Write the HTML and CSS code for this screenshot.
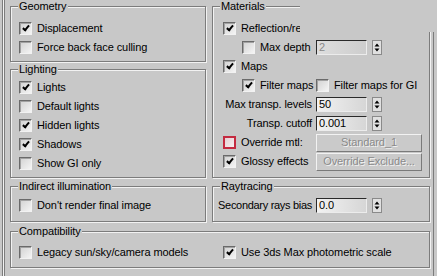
FILE: index.html
```html
<!DOCTYPE html>
<html lang="en">
<head>
  <meta charset="UTF-8">
  <meta name="viewport" content="width=device-width, initial-scale=1.0">
  <title>Global switches</title>
  <link rel="stylesheet" href="styles.css">
</head>
<body>
  <div class="rollout">
    <div class="panel">
      <div class="col">
        <div class="group geometry">
          <div class="title">Geometry</div>
          <div class="row"><span class="cb on"></span>Displacement</div>
          <div class="row"><span class="cb"></span>Force back face culling</div>
        </div>
        <div class="group lighting">
          <div class="title">Lighting</div>
          <div class="row"><span class="cb on"></span>Lights</div>
          <div class="row"><span class="cb"></span>Default lights</div>
          <div class="row"><span class="cb on"></span>Hidden lights</div>
          <div class="row"><span class="cb on"></span>Shadows</div>
          <div class="row"><span class="cb"></span>Show GI only</div>
        </div>
      </div>

      <div class="group materials">
        <div class="title">Materials</div>
        <div class="row"><span class="cb on"></span>Reflection/refraction</div>
        <div class="row">
          <div class="lead indent"><span class="cb"></span>Max depth</div>
          <span class="field off">2</span>
          <svg class="arrows" width="10" height="15" viewBox="0 0 10 15"><rect x="0.5" y="0.5" width="9" height="14" fill="#e0e0e0" stroke="#8a8a8a"/><path d="M2.5 6.5h5L5 3.5z M2.5 8.5h5L5 11.5z" fill="#000"/></svg>
        </div>
        <div class="row"><span class="cb on"></span>Maps</div>
        <div class="row">
          <div class="lead indent"><span class="cb on"></span>Filter maps</div>
          <span class="cb"></span>Filter maps for GI
        </div>
        <div class="row">
          <div class="lead right">Max transp. levels</div>
          <span class="field">50</span>
          <svg class="arrows" width="10" height="15" viewBox="0 0 10 15"><rect x="0.5" y="0.5" width="9" height="14" fill="#e0e0e0" stroke="#8a8a8a"/><path d="M2.5 6.5h5L5 3.5z M2.5 8.5h5L5 11.5z" fill="#000"/></svg>
        </div>
        <div class="row">
          <div class="lead right">Transp. cutoff</div>
          <span class="field">0.001</span>
          <svg class="arrows" width="10" height="15" viewBox="0 0 10 15"><rect x="0.5" y="0.5" width="9" height="14" fill="#e0e0e0" stroke="#8a8a8a"/><path d="M2.5 6.5h5L5 3.5z M2.5 8.5h5L5 11.5z" fill="#000"/></svg>
        </div>
        <div class="row">
          <div class="lead"><span class="cb focus"></span>Override mtl:</div>
          <span class="btn">Standard_1</span>
        </div>
        <div class="row">
          <div class="lead"><span class="cb on"></span>Glossy effects</div>
          <span class="btn">Override Exclude...</span>
        </div>
      </div>

      <div class="group indirect">
        <div class="title">Indirect illumination</div>
        <div class="row"><span class="cb"></span>Don't render final image</div>
      </div>

      <div class="group raytracing">
        <div class="title">Raytracing</div>
        <div class="row">
          <div class="lead right tight">Secondary rays bias</div>
          <span class="field">0.0</span>
          <svg class="arrows" width="10" height="15" viewBox="0 0 10 15"><rect x="0.5" y="0.5" width="9" height="14" fill="#e0e0e0" stroke="#8a8a8a"/><path d="M2.5 6.5h5L5 3.5z M2.5 8.5h5L5 11.5z" fill="#000"/></svg>
        </div>
      </div>

      <div class="group compat">
        <div class="title">Compatibility</div>
        <div class="row">
          <div class="half"><span class="cb"></span>Legacy sun/sky/camera models</div>
          <span class="cb on"></span>Use 3ds Max photometric scale
        </div>
      </div>
    </div>
  </div>
  <div class="repaint"></div>
</body>
</html>
```

FILE: styles.css
```css
body { margin: 0; background: #c8c8c8; font-family: "Liberation Sans", Arial, sans-serif; font-size: 11px; line-height: 13px; letter-spacing: -0.1px; color: #000; overflow: hidden; }
.rollout { box-sizing: border-box; width: 432px; min-height: 100vh; margin-left: 2px; padding: 0 1px 0 7px; border-left: 1px solid #7c7c7c; border-right: 1px solid #7c7c7c; box-shadow: inset 1px 0 0 #f2f2f2, inset 2px 0 0 #7c7c7c; }
.panel { display: grid; grid-template-columns: 196px 218px; column-gap: 6px; }
.col { display: flex; flex-direction: column; }

.group { box-sizing: border-box; border: 1px solid #7c7c7c; box-shadow: inset 1px 1px 0 #f2f2f2, 1px 1px 0 #f2f2f2; padding: 0 6px 4px 8px; }
.title { width: max-content; margin: -7px 0 6px -1px; padding: 0 1px; background: #c8c8c8; }
.geometry { margin-top: 6px; }
.lighting { margin-top: 7px; }
.lighting .title { margin-bottom: 2px; }
.materials { margin-top: 6px; padding-bottom: 6px; }
.indirect, .raytracing { margin-top: 8px; padding-bottom: 6px; }
.indirect .title, .raytracing .title { margin-bottom: 3px; }
.compat { grid-column: 1 / 3; margin-top: 9px; padding-bottom: 5px; }
.compat .title { margin-bottom: 5px; }

.row { display: flex; align-items: center; gap: 5px; height: 19px; white-space: nowrap; }
.materials > .row > .cb:first-child { margin-left: 2px; }
.lead { box-sizing: border-box; display: flex; align-items: center; gap: 5px; width: 95px; flex: none; margin-right: -5px; }
.lead.indent { padding-left: 21px; }
.lead.right { justify-content: flex-end; padding-right: 4px; }
.lead.tight { letter-spacing: -0.3px; }
.materials .lead:not(.indent):not(.right) { padding-left: 2px; }
.half { display: flex; align-items: center; gap: 5px; width: 204px; flex: none; margin-right: -5px; }

.cb { box-sizing: border-box; width: 13px; height: 13px; flex: none; display: flex; align-items: center; justify-content: center; border: 1px solid; border-color: #6a6a6a #f2f2f2 #f2f2f2 #6a6a6a; box-shadow: inset 1px 1px 0 #a2a2a2; background: linear-gradient(135deg, #d2d2d2, #f4f4f4); }
.cb.on::after { content: ""; width: 2px; height: 5px; margin: -2px 0 0 1px; border: solid #000; border-width: 0 2px 2px 0; transform: rotate(40deg); }
.cb.focus { border: 2px solid #c42a40; box-shadow: none; background: linear-gradient(135deg, #e6d0d4, #f6eef0); }

.field { box-sizing: border-box; width: 51px; height: 15px; padding-left: 2px; border: 1px solid; border-color: #2a2a2a #ececec #ececec #2a2a2a; background: linear-gradient(to right, #f2f2f2, #d6d6d6); line-height: 13px; }
.field.off { color: #8a8a8a; background: linear-gradient(to right, #dedede, #cdcdcd); }
.arrows { flex: none; }

.btn { box-sizing: border-box; width: 106px; height: 18px; display: flex; align-items: center; justify-content: center; border: 1px solid; border-color: #f2f2f2 #7a7a7a #7a7a7a #f2f2f2; background: #cacaca; color: #8a8a8a; text-shadow: 1px 1px 0 #f2f2f2; }

.repaint { position: absolute; left: 300px; top: 0; width: 137px; height: 32px; background: #c8c8c8; }
```
